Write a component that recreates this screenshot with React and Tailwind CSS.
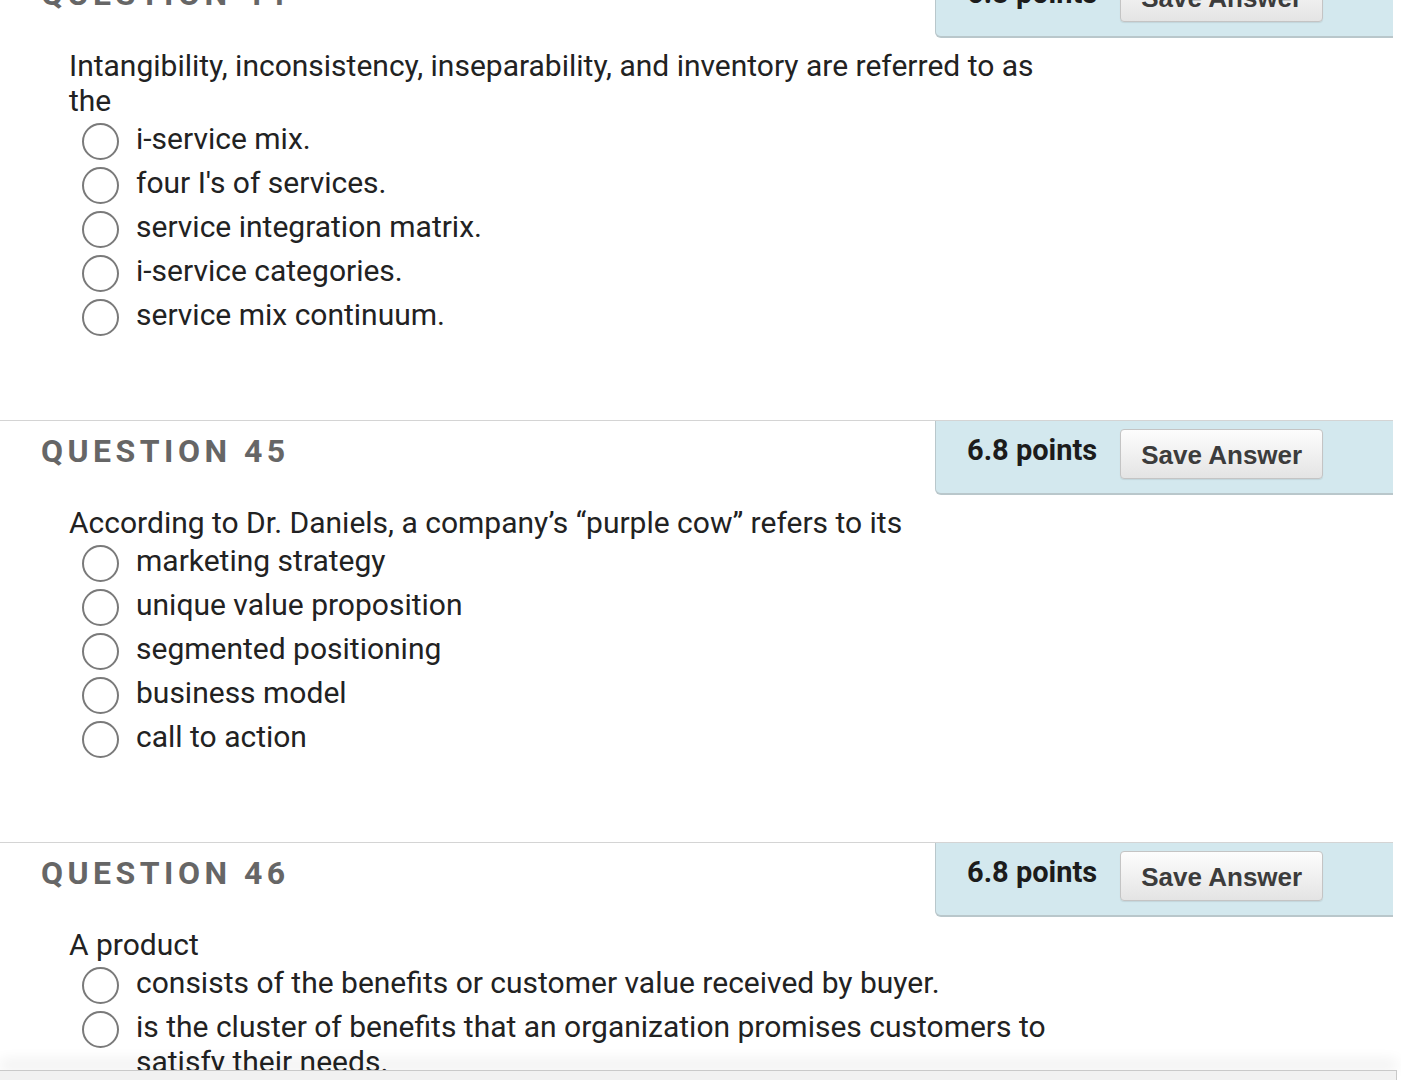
import React from "react";

const questions = [
  {
    num: 44,
    text: "Intangibility, inconsistency, inseparability, and inventory are referred to as the",
    options: [
      "i-service mix.",
      "four I's of services.",
      "service integration matrix.",
      "i-service categories.",
      "service mix continuum.",
    ],
  },
  {
    num: 45,
    text: "According to Dr. Daniels, a company\u2019s \u201cpurple cow\u201d refers to its",
    options: [
      "marketing strategy",
      "unique value proposition",
      "segmented positioning",
      "business model",
      "call to action",
    ],
  },
  {
    num: 46,
    text: "A product",
    options: [
      "consists of the benefits or customer value received by buyer.",
      "is the cluster of benefits that an organization promises customers to satisfy their needs.",
      "is a set of features that a customer considers when purchasing.",
    ],
  },
];

function Question({ q }) {
  return (
    <div className="border-t border-[#d4d4d4] pb-[84px]">
      {/* header */}
      <div className="flex items-start justify-between">
        <div className="pl-[41px] pt-[11px] text-[32px] font-bold leading-[38px] tracking-[0.14em] text-[#666666]">
          QUESTION {q.num}
        </div>
        <div className="flex h-[74px] w-[458px] items-start rounded-bl-[6px] border-b-2 border-l border-[#b9c7cb] bg-[#d3e8ee] pl-[31px] pt-[8px]">
          <div className="pt-[4px] text-[29px] font-bold leading-[35px] text-[#1c1c1c]">
            6.8 points
          </div>
          <button className="ml-[23px] h-[50px] w-[203px] rounded-[4px] border border-[#c4c4c4] bg-gradient-to-b from-[#fdfdfd] to-[#e4e4e4] pt-[2px] text-[26px] font-bold text-[#3c3c3c] shadow-[0_1px_1px_rgba(0,0,0,0.08)] [font-family:'Liberation_Sans',Arial,sans-serif]">
            Save Answer
          </button>
        </div>
      </div>

      {/* body */}
      <div className="w-[1066px] pl-[69px] pt-[10px] text-[30px] leading-[35px] text-[#222222]">
        <div>{q.text}</div>
        <div className="mt-[3px] flex flex-col gap-[5px]">
          {q.options.map((o, i) => (
            <label key={i} className="flex items-start">
              <span className="ml-[13px] mt-[2px] h-[37px] w-[37px] shrink-0 rounded-full border-[2.5px] border-[#7a7a7a] bg-white" />
              <span className="ml-[17px]">{o}</span>
            </label>
          ))}
        </div>
      </div>
    </div>
  );
}

export default function App() {
  return (
    <div className="relative h-[1080px] overflow-hidden bg-white [font-family:Roboto,'Noto_Sans',sans-serif]">
      <div className="mt-[-37px] w-[1393px]">
        {questions.map((q) => (
          <Question key={q.num} q={q} />
        ))}
      </div>

      {/* bottom bar */}
      <div className="absolute bottom-0 left-0 h-[10px] w-[1397px] border-r border-t border-[#c9c9c9] bg-[#f1f1f1] shadow-[0_-10px_14px_rgba(0,0,0,0.07)]" />
    </div>
  );
}
